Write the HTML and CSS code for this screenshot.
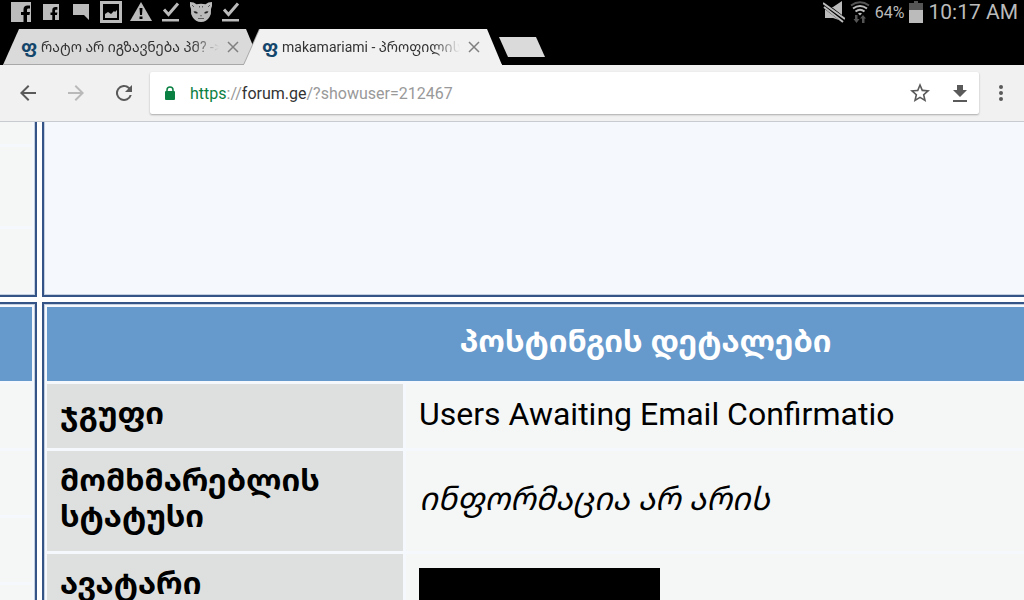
FILE: index.html
```
<!DOCTYPE html>
<html lang="ka">
<head>
    <meta charset="UTF-8">
    <meta name="viewport" content="width=device-width, initial-scale=1.0">
    <title>makamariami - პროფილის ნახვა</title>
    <link rel="stylesheet" href="styles.css">
</head>
<body>
    <!-- Android status bar -->
    <header class="status-bar">
        <div class="notifications">
            <svg width="20" height="20" viewBox="0 0 20 20"><path fill="#bbb" d="M0 0h20v20h-4v-7h2.500l.5-3H16V8c0-1 .5-1.500 1.500-1.500H19V3.500h-2.500c-2.500 0-4 1.500-4 4V10H10v3h2.500v7H0z"/></svg>
            <svg width="16" height="16" viewBox="0 0 16 16"><path fill="#bbb" d="M0 0h16v16h-4v-5h2l.4-2.500H12V7c0-.8.400-1.200 1.200-1.200h1.200V3H12.500c-2 0-3.200 1.200-3.200 3v2.500H7.500V11h1.800v5H0z"/></svg>
            <svg width="16" height="16" viewBox="0 0 16 16"><path fill="#bbb" d="M0 0h16v16l-5-5H0z"/></svg>
            <svg width="22" height="22" viewBox="0 0 22 22"><path fill="none" stroke="#bbb" stroke-width="3" d="M1.500 1.500h19v19h-19z"/><path fill="#bbb" d="M5 17v-4l3-2 3 2 3-3 1 1 2-2v8z"/></svg>
            <svg width="22" height="20" viewBox="0 0 22 20"><path fill="#bbb" d="M11 0l11 19H0z"/><path fill="#000" d="M9.500 6h3l-.5 7h-2zM9.500 14.500h3V17h-3z"/></svg>
            <svg width="18" height="20" viewBox="0 0 18 20"><path fill="none" stroke="#bbb" stroke-width="3" d="M2 7.500l4.500 5L16 1.500"/><path fill="#bbb" d="M0 17h17v2.500H0z"/></svg>
            <svg width="24" height="20" viewBox="0 0 24 20"><path fill="#bbb" d="M1 0q4 0 6.500 2.200 4.500-1 9 0Q19 0 23 0q.5 4-1 7 .5 5-1.500 8-3 5-8.500 5t-8.500-5Q1.500 12 2 7 .5 4 1 0z"/><path fill="#222" d="M4.500 9.500q3-1 4.500 1.500-3 1.500-4.500-1.500zM19.500 9.500q-3-1-4.500 1.500 3 1.500 4.500-1.500zM11 13.500h2l-1 1z"/><path fill="none" stroke="#444" stroke-width=".8" d="M3 3l2 2M21 3l-2 2M10.500 4v1.500M13.500 4v1.500M9 16.500h6"/></svg>
            <svg width="18" height="20" viewBox="0 0 18 20"><path fill="none" stroke="#bbb" stroke-width="3" d="M2 7.500l4.500 5L16 1.500"/><path fill="#bbb" d="M0 17h17v2.500H0z"/></svg>
        </div>
        <div class="system">
            <svg width="22" height="24" viewBox="0 0 22 24"><path fill="#bbb" d="M2 7h8l9-6v20l-9-3H2z"/><path stroke="#000" stroke-width="6" d="M0 4l22 17"/><path stroke="#bbb" stroke-width="2" d="M0 3l22 16M1 7l19 15"/></svg>
            <svg width="20" height="22" viewBox="0 0 20 22"><g fill="none" stroke-width="2"><path stroke="#555" d="M1 4.500q9-6.500 18 0"/><path stroke="#bbb" d="M3 7.500q7-5 14 0M5.500 10.500q4.500-3.500 9 0"/></g><path fill="#bbb" d="M8 12.500q2-1.500 4 0l-2 2z"/><path fill="#555" d="M5 14h2.500v4h2L6.500 22 3.500 18H5zM12 22v-4.500h-2l3-3.500 3 3.500h-1.500V22z"/></svg>
            <span class="charge">64%</span>
            <svg width="14" height="22" viewBox="0 0 14 22"><path fill="#555" d="M0 2h5V0h4v2h5v7H0z"/><path fill="#bbb" d="M0 9h14v13H0z"/></svg>
            <time class="clock">10:17 AM</time>
        </div>
    </header>

    <!-- Browser tabs -->
    <nav class="tab-strip">
        <div class="tab-wrap">
            <div class="tab">
                <span class="favicon">ფ</span>
                <a href="#" class="tab-title">რატო არ იგზავნება პმ? -&gt; (</a>
                <button class="tab-close" aria-label="Close tab">
                    <svg width="12" height="12" viewBox="0 0 12 12"><path stroke="#808080" stroke-width="1.500" d="M1 1l10 10M11 1L1 11"/></svg>
                </button>
            </div>
        </div>
        <div class="tab-wrap active">
            <div class="tab">
                <span class="favicon">ფ</span>
                <a href="#" class="tab-title">makamariami - პროფილის</a>
                <button class="tab-close" aria-label="Close tab">
                    <svg width="12" height="12" viewBox="0 0 12 12"><path stroke="#808080" stroke-width="1.500" d="M1 1l10 10M11 1L1 11"/></svg>
                </button>
            </div>
        </div>
        <button class="new-tab" aria-label="New tab"></button>
    </nav>

    <!-- Toolbar -->
    <div class="toolbar">
        <button class="tool" aria-label="Back">
            <svg width="24" height="24" viewBox="0 0 24 24"><path fill="#5a5a5a" d="M20 11H7.800l5.600-5.600L12 4l-8 8 8 8 1.400-1.400L7.800 13H20z"/></svg>
        </button>
        <button class="tool" aria-label="Forward" disabled>
            <svg width="24" height="24" viewBox="0 0 24 24"><path fill="#b9b9b9" d="M12 4l-1.400 1.400 5.600 5.600H4v2h12.200l-5.600 5.600L12 20l8-8z"/></svg>
        </button>
        <button class="tool" aria-label="Reload">
            <svg width="24" height="24" viewBox="0 0 24 24"><path fill="#5a5a5a" d="M17.650 6.350A8 8 0 1 0 19.730 14h-2.080A6 6 0 1 1 12 6c1.660 0 3.140.69 4.220 1.780L13 11h7V4z"/></svg>
        </button>
        <div class="omnibox">
            <svg width="12" height="14" viewBox="0 0 12 14"><rect x="1" y="5" width="10" height="9" rx="1" fill="#0b8043"/><path fill="none" stroke="#0b8043" stroke-width="1.500" d="M3 6V4a3 3 0 0 1 6 0v2"/></svg>
            <div class="url" role="textbox" aria-label="Address" contenteditable="true" spellcheck="false"><span class="scheme">https</span>://<span class="host">forum.ge</span>/?showuser=212467</div>
            <button class="tool" aria-label="Bookmark">
                <svg width="24" height="24" viewBox="0 0 24 24"><path fill="#5a5a5a" d="M22 9.240l-7.190-.62L12 2 9.190 8.630 2 9.240l5.460 4.730L5.820 21 12 17.270 18.180 21l-1.630-7.030zM12 15.400l-3.760 2.270 1-4.280-3.320-2.880 4.380-.38L12 6.100l1.710 4.040 4.380.38-3.320 2.880 1 4.280z"/></svg>
            </button>
            <button class="tool" aria-label="Download">
                <svg width="24" height="24" viewBox="0 0 24 24"><path fill="#5a5a5a" d="M9 4h6v5h4l-7 7-7-7h4zM5 19h14v2H5z"/></svg>
            </button>
        </div>
        <button class="tool menu" aria-label="Menu">
            <svg width="24" height="24" viewBox="0 0 24 24"><g fill="#5a5a5a"><circle cx="12" cy="6" r="2"/><circle cx="12" cy="12" r="2"/><circle cx="12" cy="18" r="2"/></g></svg>
        </button>
    </div>

    <!-- Forum profile page, zoomed in -->
    <main class="viewport">
        <div class="forum">
            <section class="panel side upper">
                <div class="row"></div>
                <div class="row tall"></div>
                <div class="row fill"></div>
            </section>
            <section class="panel upper"></section>
            <section class="panel side">
                <div class="row head"></div>
                <div class="row"></div>
                <div class="row"></div>
                <div class="row"></div>
                <div class="row fill"></div>
            </section>
            <section class="panel">
                <table class="details">
                    <thead>
                        <tr><th colspan="2" class="title">პოსტინგის დეტალები</th></tr>
                    </thead>
                    <tbody>
                        <tr>
                            <th scope="row">ჯგუფი</th>
                            <td>Users Awaiting Email Confirmatio</td>
                        </tr>
                        <tr>
                            <th scope="row">მომხმარებლის სტატუსი</th>
                            <td><i>ინფორმაცია არ არის</i></td>
                        </tr>
                        <tr>
                            <th scope="row">ავატარი</th>
                            <td><div class="avatar"></div></td>
                        </tr>
                    </tbody>
                </table>
            </section>
        </div>
    </main>
</body>
</html>
```
FILE: styles.css
```
* {
    box-sizing: border-box;
}
body {
    margin: 0;
    height: 100vh;
    display: flex;
    flex-direction: column;
    overflow: hidden;
    background-color: #000;
    font-family: Roboto, "Noto Sans Georgian", "DejaVu Sans", sans-serif;
}
button {
    border: none;
    padding: 0;
    background: none;
}
svg {
    display: block;
    flex: none;
}

/* status bar */
.status-bar {
    flex: none;
    height: 29px;
    display: flex;
    justify-content: space-between;
    padding: 0 6px 5px;
    color: #bbb;
}
.notifications {
    display: grid;
    grid-template-columns: repeat(8, 30px);
    place-items: center;
}
.system {
    display: flex;
    align-items: center;
    gap: 5px;
}
.charge {
    font-size: 16px;
}
.clock {
    font-size: 21px;
}

/* tabs */
.tab-strip {
    flex: none;
    height: 36px;
    display: flex;
    padding-left: 3px;
}
.tab-wrap {
    width: 258px;
    margin-right: -17px;
}
.tab-wrap.active {
    z-index: 1;
    margin-right: 0;
    filter: drop-shadow(-1px 0 0 #a8a8a8);
}
.tab {
    height: 36px;
    display: flex;
    align-items: center;
    padding: 0 22px 0 18px;
    background-color: #dadada;
    border-bottom: 1px solid #a8a8a8;
    clip-path: polygon(16px 0, calc(100% - 15px) 0, 100% 100%, 0 100%);
}
.active .tab {
    background-color: #f1f1f1;
    border-bottom-color: #f1f1f1;
}
.favicon {
    width: 20px;
    color: #14466b;
    font-size: 18px;
    font-weight: bold;
    line-height: 20px;
}
.tab-title {
    flex: 1;
    overflow: hidden;
    white-space: nowrap;
    color: #333;
    font-size: 14px;
    text-decoration: none;
    mask-image: linear-gradient(to right, #000 85%, transparent);
}
.tab-close {
    margin-left: 8px;
}
.new-tab {
    width: 46px;
    height: 20px;
    margin: 8px 0 0 -3px;
    background-color: #dadada;
    clip-path: polygon(0 0, 37px 0, 100% 100%, 9px 100%);
}

/* toolbar */
.toolbar {
    flex: none;
    height: 57px;
    display: flex;
    align-items: center;
    padding: 0 11px 0 4px;
    background-color: #f1f1f1;
    border-bottom: 1px solid #c8ccd0;
}
.tool {
    flex: none;
    width: 48px;
    display: flex;
    justify-content: center;
}
.omnibox {
    flex: 1;
    height: 42px;
    display: flex;
    align-items: center;
    gap: 2px;
    margin-left: 2px;
    padding-left: 14px;
    background-color: #fff;
    border-radius: 2px;
    box-shadow: 0 1px 2px rgba(0, 0, 0, 0.3);
}
.omnibox .tool {
    width: 38px;
}
.url {
    flex: 1;
    margin-left: 12px;
    color: #999;
    font-size: 16px;
}
.scheme {
    color: #0b8043;
}
.host {
    color: #333;
}
.menu {
    width: 24px;
    margin-left: 10px;
}

/* forum page */
.viewport {
    flex: 1;
    min-height: 0;
    overflow: hidden;
    background-color: #fff;
}
.forum {
    width: 122%;
    display: grid;
    grid-template-columns: 37px 1fr;
    gap: 5px;
}
.panel {
    border: 2px solid #345487;
    background-color: #f5f9fd;
    box-shadow: inset 1px 1px 0 #c3cfdf;
}
.side {
    display: flex;
    flex-direction: column;
    gap: 3px;
    padding: 3px 3px 3px 0;
    border-left: none;
    box-shadow: inset -1px 1px 0 #c3cfdf;
}
.upper {
    height: 175px;
    border-top: none;
    box-shadow: inset 1px -1px 0 #c3cfdf;
}
.side.upper {
    padding-top: 0;
    box-shadow: inset -1px -1px 0 #c3cfdf;
}
.row {
    flex: none;
    height: 64px;
    background-color: #f5f7f7;
}
.upper .row {
    height: 22px;
}
.upper .row.tall {
    height: 79px;
}
.panel .row.fill {
    flex: 1;
}
.row.head {
    height: 74px;
    background-color: #6699cc;
}
.details {
    width: 100%;
    border-spacing: 3px;
    color: #000;
    font-size: 32px;
    line-height: 36px;
}
.details th,
.details td {
    padding: 12px 13px 16px;
}
.details th {
    width: 356px;
    background-color: #dee0df;
    font-size: 31px;
    text-align: left;
    vertical-align: top;
}
.details td {
    background-color: #f5f7f7;
}
.details .title {
    height: 74px;
    background-color: #6699cc;
    color: #fff;
    text-align: center;
    vertical-align: middle;
}
.avatar {
    width: 241px;
    height: 240px;
    margin-top: 2px;
    background-color: #000;
}
```
